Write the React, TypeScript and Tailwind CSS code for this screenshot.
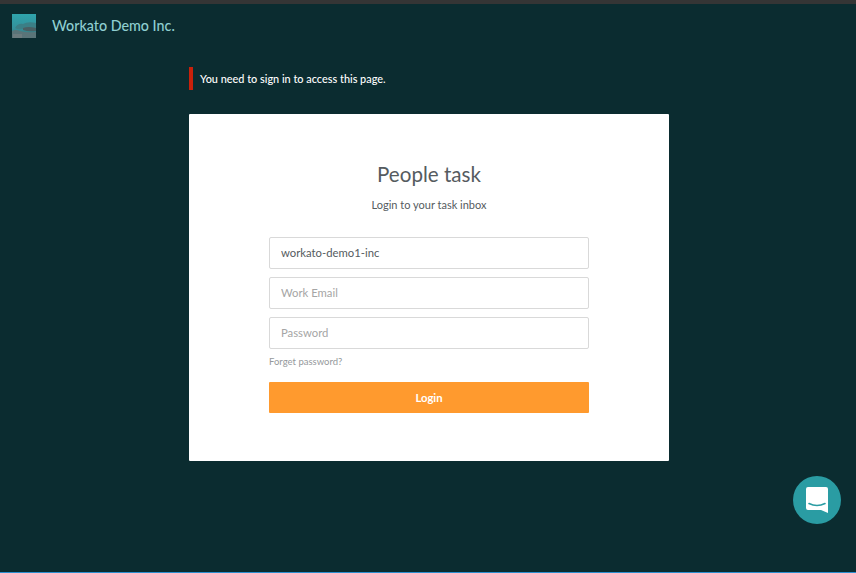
import React from "react";

const Logo = () => (
  <svg width="24" height="24" viewBox="0 0 24 24" className="block shrink-0">
    <defs>
      <linearGradient id="logoSky" x1="0" y1="0" x2="0" y2="1">
        <stop offset="0" stopColor="#2fa4ac" />
        <stop offset="0.6" stopColor="#34909a" />
        <stop offset="1" stopColor="#3f6d72" />
      </linearGradient>
    </defs>
    <rect width="24" height="24" fill="url(#logoSky)" />
    <path d="M3 14 Q6 9 11 10 Q16 7 24 9 V15 H10 Q6 16 3 14 Z" fill="#3b7f86" />
    <path d="M11 14 Q16 12 24 14 V17 Q16 18 11 16 Z" fill="#4a5f63" />
    <path d="M0 17 Q4 15 8 17 Q14 19 24 18 V24 H0 Z" fill="#5a7478" />
    <path d="M1 20 H10 V24 H1 Z" fill="#6f7d80" opacity="0.8" />
  </svg>
);

const ChatIcon = () => (
  <svg width="22" height="26" viewBox="0 0 22 26" className="block">
    <path
      d="M2 0 H20 Q22 0 22 2 V26 L15 23 H2 Q0 23 0 21 V2 Q0 0 2 0 Z"
      fill="#ffffff"
    />
    <path
      d="M3 16.5 Q11 20.5 19 16.5"
      fill="none"
      stroke="#2a9ca3"
      strokeWidth="1.6"
      strokeLinecap="round"
    />
  </svg>
);

function Field({ value, placeholder, type = "text" }: { value?: string; placeholder: string; type?: string }) {
  return (
    <input
      type={type}
      defaultValue={value}
      placeholder={placeholder}
      className="block h-8 w-full rounded-[2px] border border-[#d9d9d9] bg-white px-[11px] pb-[2px] text-[11.3px] text-[#555b60] outline-none placeholder:text-[#a5a5a5]"
    />
  );
}

export default function App() {
  return (
    <div
      className="relative flex h-[573px] flex-col overflow-hidden border-t-4 border-b border-t-[#353535] border-b-[#2d8fd0] bg-[#0b2c30]"
      style={{ fontFamily: '"Lato", "Open Sans", sans-serif' }}
    >
      <header className="flex items-center gap-4 pl-3 pt-2.5">
        <Logo />
        <span className="text-[14.3px] font-medium leading-6 text-[#8fcfd0]">Workato Demo Inc.</span>
      </header>

      <main className="flex flex-col pl-[189px] pr-[187px] pt-[29px]">
        <div className="flex h-[23px] items-center border-l-4 border-[#c8210b] pl-[7px] pt-[2px] text-[10.9px] font-medium text-white">
          You need to sign in to access this page.
        </div>

        <section className="mt-6 flex h-[347px] flex-col items-center rounded-[1px] bg-white px-20 pt-[45px]">
          <h1 className="text-[20.6px] leading-[30px] font-normal text-[#555b60]">People task</h1>
          <p className="mt-2 text-[11px] leading-4 text-[#555b60]">Login to your task inbox</p>

          <form className="mt-6 flex w-full flex-col">
            <div className="flex flex-col gap-2">
              <Field value="workato-demo1-inc" placeholder="Company" />
              <Field placeholder="Work Email" />
              <Field placeholder="Password" type="password" />
            </div>
            <a className="mt-[7px] text-[9.5px] leading-3 text-[#95999c]">Forget password?</a>
            <button
              type="button"
              className="mt-3.5 h-[31px] w-full rounded-[1px] bg-[#ff9a2e] pt-[2px] text-[11.3px] font-bold text-white"
            >
              Login
            </button>
          </form>
        </section>
      </main>

      <button
        type="button"
        className="absolute left-[793px] top-[472px] flex h-12 w-12 items-center justify-center rounded-full bg-[#2a9ca3]"
      >
        <ChatIcon />
      </button>
    </div>
  );
}
